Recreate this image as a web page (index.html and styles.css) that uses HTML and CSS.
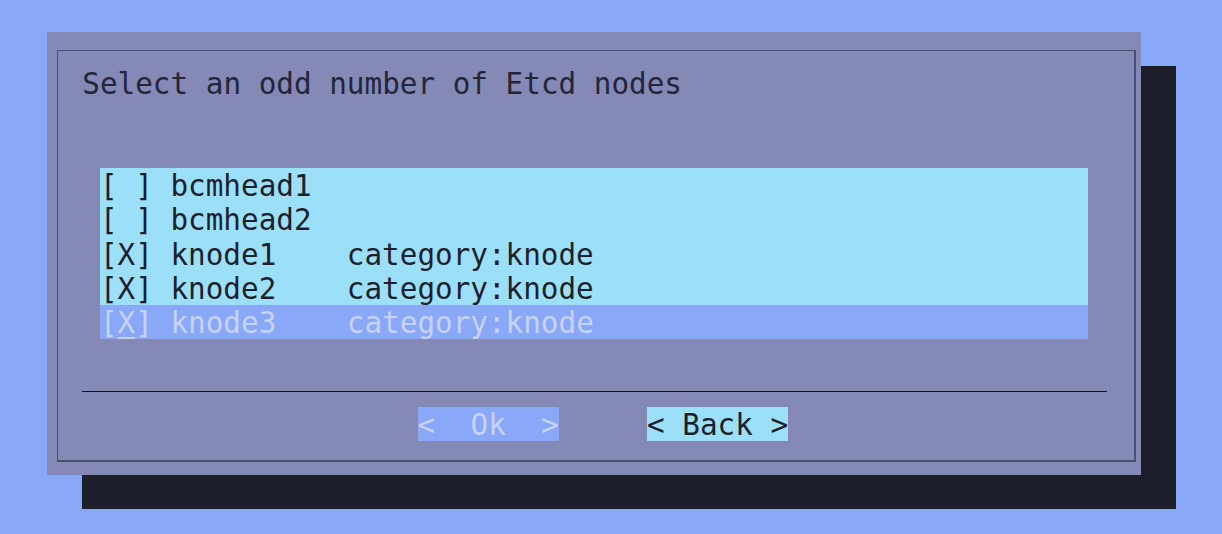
FILE: index.html
```html
<!DOCTYPE html>
<html lang="en">
<head>
<meta charset="utf-8">
<title>Select Etcd nodes</title>
<link rel="stylesheet" href="styles.css">
</head>
<body>
<div class="screen">
  <div class="dialog">
    <div class="frame">
      <div class="title">Select an odd number of Etcd nodes</div>
      <div class="list">
        <div class="row">[ ] bcmhead1</div>
        <div class="row">[ ] bcmhead2</div>
        <div class="row">[X] knode1    category:knode</div>
        <div class="row">[X] knode2    category:knode</div>
        <div class="row current">[<span class="cursor">X</span>] knode3    category:knode</div>
      </div>
      <div class="separator"></div>
      <div class="buttons">
        <div class="btn disabled">&lt;  Ok  &gt;</div>
        <div class="btn active">&lt; Back &gt;</div>
      </div>
    </div>
  </div>
</div>
</body>
</html>
```

FILE: styles.css
```css
html, body {
  margin: 0;
  padding: 0;
}
body {
  background: #89a8f8;
  width: 1222px;
  height: 534px;
  overflow: hidden;
  font-family: "DejaVu Sans Mono", "Liberation Mono", monospace;
  font-size: 29.3px;
  line-height: 34.1px;
  color: #1d1f2c;
}
.screen {
  padding: 32px 0 0 47px;
}
.dialog {
  width: 1094px;
  height: 443px;
  background: #8489b5;
  box-shadow: 35px 34px 0 0 #1c1e2b;
  padding: 18px 0 0 10px;
  box-sizing: border-box;
}
.frame {
  box-sizing: border-box;
  width: 1079px;
  height: 412px;
  border-top: 1px solid #4c5070;
  border-left: 1px solid #4c5070;
  border-right: 2px solid #4c5070;
  border-bottom: 2px solid #4c5070;
  display: flex;
  flex-direction: column;
}
.title {
  margin: 16.1px 0 0 24.3px;
  white-space: pre;
  color: #23253a;
}
.list {
  margin: 67.2px 0 0 41.9px;
  width: 988.1px;
  background: #9cdff8;
}
.row {
  white-space: pre;
  box-sizing: border-box;
  height: 34.1px;
  padding-top: 1px;
}
.row.current {
  background: #89a8f8;
  color: #c8d2f2;
}
.cursor {
  text-decoration: underline;
  text-decoration-thickness: 1.5px;
  text-underline-offset: 4px;
  text-decoration-color: #c8d2f2;
}
.separator {
  margin: 52px 0 0 24.3px;
  width: 1025px;
  height: 1px;
  background: #121420;
}
.buttons {
  margin: 15.5px 0 0 359.6px;
  display: flex;
  gap: 88.2px;
}
.btn {
  white-space: pre;
  box-sizing: border-box;
  width: 141.2px;
  height: 34.1px;
  padding-top: 1px;
}
.btn.disabled {
  background: #89a8f8;
  color: #c8d2f2;
}
.btn.active {
  background: #9cdff8;
  color: #1d1f2c;
}
```
